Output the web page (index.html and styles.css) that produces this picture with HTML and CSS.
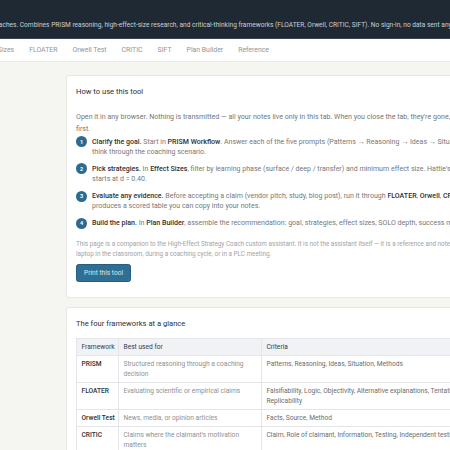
FILE: index.html
```html
<!DOCTYPE html>
<html lang="en">
<head>
<meta charset="utf-8">
<title>High-Effect Strategy Coach — Companion</title>
<link rel="stylesheet" href="styles.css">
</head>
<body>
<header class="site-header">
  <p class="tagline">An offline reference for instructional coaches. Combines PRISM reasoning, high-effect-size research, and critical-thinking frameworks (FLOATER, Orwell, CRITIC, SIFT). No sign-in, no data sent anywhere.</p>
</header>
<nav class="tabs">
  <a class="tab">Effect Sizes</a>
  <a class="tab">FLOATER</a>
  <a class="tab">Orwell Test</a>
  <a class="tab">CRITIC</a>
  <a class="tab">SIFT</a>
  <a class="tab">Plan Builder</a>
  <a class="tab">Reference</a>
</nav>
<main class="page">
  <section class="card">
    <h2 class="card-title">How to use this tool</h2>
    <p class="lead">Open it in any browser. Nothing is transmitted — all your notes live only in this tab. When you close the tab, they're gone, so save your notes first.</p>
    <ol class="steps">
      <li class="step"><span class="num">1</span><p class="step-text"><strong>Clarify the goal.</strong> Start in <b>PRISM Workflow</b>. Answer each of the five prompts (Patterns → Reasoning → Ideas → Situation → Methods) to think through the coaching scenario.</p></li>
      <li class="step"><span class="num">2</span><p class="step-text"><strong>Pick strategies.</strong> In <b>Effect Sizes</b>, filter by learning phase (surface / deep / transfer) and minimum effect size. Hattie's hinge point typically starts at d = 0.40.</p></li>
      <li class="step"><span class="num">3</span><p class="step-text"><strong>Evaluate any evidence.</strong> Before accepting a claim (vendor pitch, study, blog post), run it through <b>FLOATER</b>, <b>Orwell</b>, <b>CRITIC</b>, or <b>SIFT</b>. Each produces a scored table you can copy into your notes.</p></li>
      <li class="step"><span class="num">4</span><p class="step-text"><strong>Build the plan.</strong> In <b>Plan Builder</b>, assemble the recommendation: goal, strategies, effect sizes, SOLO depth, success measures.</p></li>
    </ol>
    <p class="note">This page is a companion to the High-Effect Strategy Coach custom assistant. It is not the assistant itself — it is a reference and notebook to keep open on a laptop in the classroom, during a coaching cycle, or in a PLC meeting.</p>
    <button class="btn" type="button">Print this tool</button>
  </section>

  <section class="card">
    <h2 class="card-title">The four frameworks at a glance</h2>
    <table class="grid">
      <colgroup><col class="c1"><col class="c2"><col class="c3"></colgroup>
      <thead>
        <tr><th>Framework</th><th>Best used for</th><th>Criteria</th></tr>
      </thead>
      <tbody>
        <tr><td class="name">PRISM</td><td class="use">Structured reasoning through a coaching decision</td><td class="crit">Patterns, Reasoning, Ideas, Situation, Methods</td></tr>
        <tr><td class="name">FLOATER</td><td class="use">Evaluating scientific or empirical claims</td><td class="crit">Falsifiability, Logic, Objectivity, Alternative explanations, Tentativeness, Evidence, Replicability</td></tr>
        <tr><td class="name">Orwell Test</td><td class="use">News, media, or opinion articles</td><td class="crit">Facts, Source, Method</td></tr>
        <tr><td class="name">CRITIC</td><td class="use">Claims where the claimant's motivation matters</td><td class="crit">Claim, Role of claimant, Information, Testing, Independent testing, Conclusion</td></tr>
        <tr><td class="name">SIFT</td><td class="use">Quick checks on online sources</td><td class="crit">Stop, Investigate the source, Find better coverage, Trace claims</td></tr>
      </tbody>
    </table>
  </section>
</main>
</body>
</html>
```

FILE: styles.css
```css
* { box-sizing: border-box; }

html, body {
  margin: 0;
  padding: 0;
}

body {
  width: 450px;
  height: 450px;
  overflow: hidden;
  background: #f5f5f1;
  font-family: Roboto, "Liberation Sans", Arial, sans-serif;
  color: #333;
}

.site-header {
  background: #1f2933;
  border-bottom: 1px solid #3b4552;
  padding: 19px 0 7px;
}

.tagline {
  margin: 0 0 0 -115px;
  white-space: nowrap;
  font-size: 6.6px;
  line-height: 12px;
  color: #c9d0d7;
}

.tabs {
  display: flex;
  background: #fff;
  border-bottom: 1px solid #ebebe7;
  height: 23px;
  margin-left: -29.5px;
  align-items: center;
}

.tab {
  padding: 0 7.5px;
  font-size: 6.9px;
  color: #90959c;
  white-space: nowrap;
}

.page {
  padding: 13px 0 0 66px;
  display: flex;
  flex-direction: column;
  gap: 9px;
}

.card {
  width: 467px;
  flex: none;
  background: #fff;
  border: 1px solid #e7e7e3;
  border-radius: 3px;
  padding: 10.5px 10px 15px 9px;
}

.card-title {
  margin: 0;
  font-size: 7.6px;
  line-height: 9px;
  font-weight: 400;
  color: #2b2f33;
}

.lead {
  margin: 15px 0 2px;
  font-size: 7.1px;
  line-height: 12px;
  color: #767676;
}

.steps {
  list-style: none;
  margin: 0;
  padding: 0;
  display: flex;
  flex-direction: column;
  gap: 6.7px;
}

.step {
  display: flex;
  align-items: flex-start;
  gap: 5px;
}

.num {
  flex: none;
  width: 11px;
  height: 11px;
  border-radius: 50%;
  background: #2c6a8f;
  color: #fff;
  font-size: 5.5px;
  font-weight: 700;
  display: flex;
  align-items: center;
  justify-content: center;
  margin-top: -0.5px;
}

.step-text {
  margin: 0;
  font-size: 7.05px;
  line-height: 10.3px;
  color: #777;
}

.step-text strong,
.step-text b {
  font-weight: 500;
  color: #303030;
}

.note {
  margin: 10px 0 4.7px;
  font-size: 6.36px;
  line-height: 10px;
  color: #a3a3a3;
}

.btn {
  display: block;
  height: 18.5px;
  padding: 0 7px;
  border: 1px solid #285f80;
  border-radius: 2.5px;
  background: #2f6f94;
  color: #d9e6ee;
  font-family: inherit;
  font-size: 6.6px;
}

.grid {
  margin-top: 10.5px;
  width: 100%;
  table-layout: fixed;
  border-collapse: collapse;
  font-size: 6.65px;
  line-height: 10px;
}

.c1 { width: 42px; }
.c2 { width: 143px; }

.grid th,
.grid td {
  border: 1px solid #e3e5e8;
  padding: 3px 4.5px;
  text-align: left;
  vertical-align: top;
}

.grid th {
  background: #f1f2f5;
  font-weight: 400;
  color: #3a3d42;
}

.grid .name {
  font-weight: 500;
  color: #2e3136;
  white-space: nowrap;
}

.grid .use { color: #909090; }
.grid .crit { color: #6c6c6c; }
```
